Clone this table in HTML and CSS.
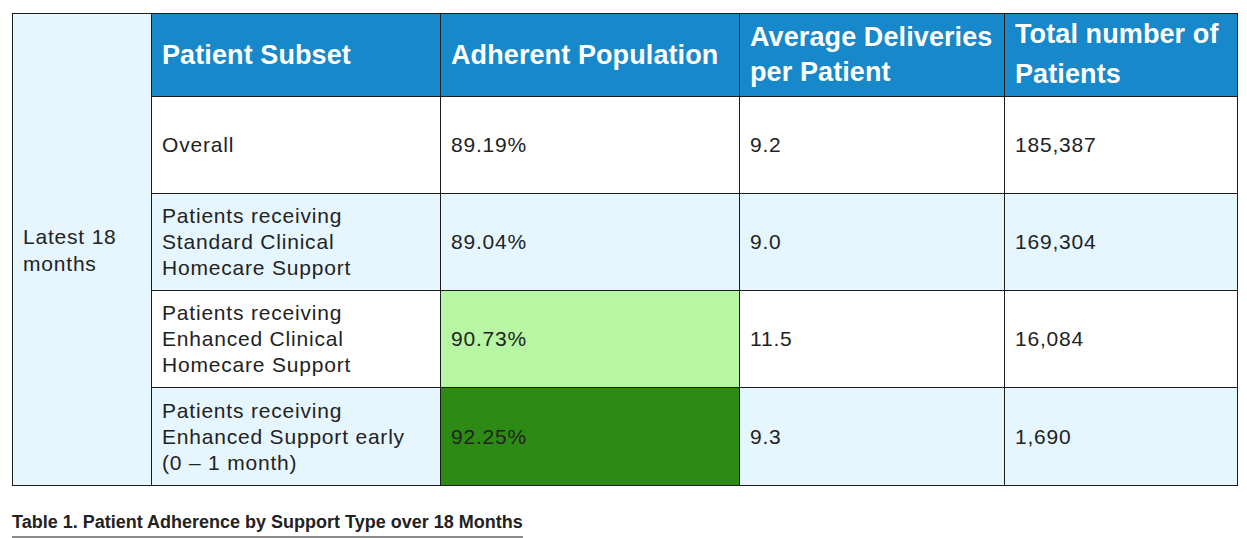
FILE: index.html
```html
<!DOCTYPE html>
<html>
<head>
<meta charset="utf-8">
<link rel="stylesheet" href="styles.css">
</head>
<body>
<div class="page">
  <table class="data">
    <colgroup>
      <col class="c1"><col class="c2"><col class="c3"><col class="c4"><col class="c5">
    </colgroup>
    <tr class="head">
      <td class="period" rowspan="5">Latest 18<br>months</td>
      <th>Patient Subset</th>
      <th>Adherent Population</th>
      <th class="avg">Average Deliveries<br>per Patient</th>
      <th class="tot">Total number of<br>Patients</th>
    </tr>
    <tr class="row white">
      <td>Overall</td>
      <td>89.19%</td>
      <td>9.2</td>
      <td>185,387</td>
    </tr>
    <tr class="row blue">
      <td>Patients receiving<br>Standard Clinical<br>Homecare Support</td>
      <td>89.04%</td>
      <td>9.0</td>
      <td>169,304</td>
    </tr>
    <tr class="row white">
      <td>Patients receiving<br>Enhanced Clinical<br>Homecare Support</td>
      <td class="lightgreen">90.73%</td>
      <td>11.5</td>
      <td>16,084</td>
    </tr>
    <tr class="row blue last">
      <td>Patients receiving<br>Enhanced Support early<br>(0 – 1 month)</td>
      <td class="darkgreen">92.25%</td>
      <td>9.3</td>
      <td>1,690</td>
    </tr>
  </table>
  <div class="caption">Table 1. Patient Adherence by Support Type over 18 Months</div>
</div>
</body>
</html>
```

FILE: styles.css
```css
html, body {
  margin: 0;
  padding: 0;
  background: #ffffff;
}
body {
  font-family: "Liberation Sans", Arial, sans-serif;
  color: #222222;
}
.page {
  padding: 13px 0 0 12px;
}
.data {
  border-collapse: collapse;
  table-layout: fixed;
  width: 1225px;
}
.c1 { width: 139px; }
.c2 { width: 289px; }
.c3 { width: 299px; }
.c4 { width: 265px; }
.c5 { width: 233px; }
.data td, .data th {
  border: 1.5px solid #1c1c1c;
  padding: 0 6px 0 10px;
  text-align: left;
  vertical-align: middle;
  white-space: nowrap;
}
.head {
  height: 83px;
}
.head th {
  background: #1788c9;
  color: #ffffff;
  font-weight: bold;
  font-size: 27px;
  line-height: 36px;
  letter-spacing: 0.1px;
}
.head th.avg {
  line-height: 35px;
}
.head th.tot {
  line-height: 40px;
  padding-bottom: 2px;
}
.period {
  background: #e6f6fe;
  font-size: 21px;
  line-height: 27px;
  letter-spacing: 0.8px;
}
.row {
  height: 97px;
}
.row.last {
  height: 98px;
}
.row td {
  font-size: 21px;
  line-height: 26px;
  letter-spacing: 0.8px;
}
.row.white td { background: #ffffff; }
.row.blue td { background: #e6f6fe; }
.row td.lightgreen { background: #b7f6a2; }
.row td.darkgreen { background: #2d8a14; }
.caption {
  display: inline-block;
  margin-top: 26px;
  font-weight: bold;
  font-size: 18px;
  line-height: 21px;
  padding-bottom: 3px;
  color: #222222;
  border-bottom: 2px solid #8a8a8a;
}
```
